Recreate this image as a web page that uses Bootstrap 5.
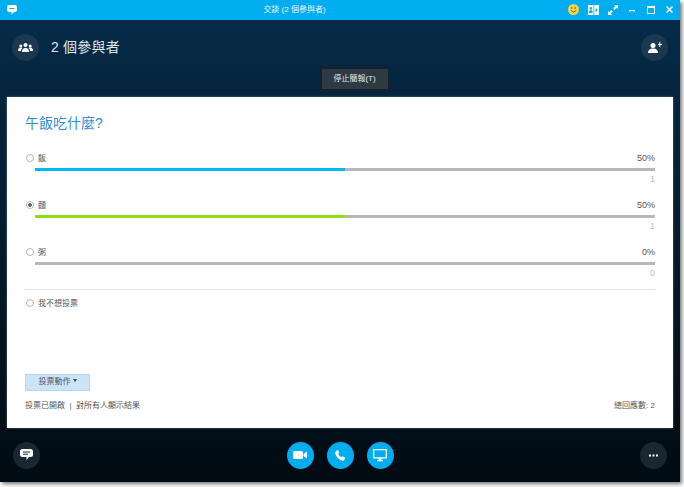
<!doctype html>
<html lang="zh-Hant"><head><meta charset="utf-8">
<link href="https://cdn.jsdelivr.net/npm/bootstrap@5.3.0/dist/css/bootstrap.min.css" rel="stylesheet">
<style>
html,body{margin:0;height:487px;overflow:hidden;background:#fff}
body{font-family:"Liberation Sans","Noto Sans CJK TC",sans-serif;font-size:8px;color:#555}
.win{width:680px;height:482px;background:linear-gradient(#062d4c 0,#05253e 90px,#031523 330px,#010b13 482px);box-shadow:2px 2px 4px rgba(0,0,0,.55)}
.tbar{height:20px;background:#00adef;color:#e6f6fd;padding:0 7px 0 7px}
.tbar-title{flex:1;text-align:center;font-size:8px;padding-left:4px}
.tbtns{gap:11px}
.tight{margin-right:-2px}
.hdr{height:56px;padding:0 12px;color:#dfe7ec}
.hdr-t{font-size:14px;letter-spacing:.2px;margin-left:12px}
.cbtn{width:27px;height:27px;border-radius:50%;background:#1c3850;flex:none}
.cbtn.dk{background:#1b2730}
.stopr{height:21px;padding-left:29px}
.stopb{width:70px;height:24px;background:#2d3a44;border:2px solid #16202a;color:#e6e9eb;font-size:8px;border-radius:0;margin-top:-9px;padding:0}
.pane{margin:0 7px;height:332px;background:#fff;padding:16px 18px 0;box-shadow:0 0 2px rgba(255,255,255,.4)}
.ttl{font-size:14px;color:#2f8bd6;line-height:20px;margin-bottom:19px;font-weight:400}
.opt{height:47px}
.lab{height:13px;line-height:13px;color:#555}
.pct{font-size:9px}
.rad{width:8px;height:8px;border:1px solid #b5b5b5;border-radius:50%;background:#fff;flex:none;margin:0 5px 0 1px}
.rad.on{background:radial-gradient(circle,#666 0,#666 40%,#fff 45%)}
.lab .rad+span{margin-left:-1px}
.trk{height:3px;margin:3px 0 2px 10px;background:#b8b8b8;display:flex}
.fil{height:3px}
.c1{background:#00b8ee}.c2{background:#8fdc12}
.cnt{color:#bbb;text-align:right;line-height:12px;font-size:9px}
.rule{border-top:1px solid #e4e4e4;margin:-4px 0 7px}
.actb{display:block;width:65px;height:17px;background:#cbe4f7;border:1px solid #b3d8f3;border-radius:0;color:#555;font-size:8px;padding:0;line-height:14px;margin-top:64px}
.caretm{display:inline-block;border:2px solid transparent;border-top:3px solid #444;border-bottom:0;margin-left:2px;vertical-align:2px}
.foot{margin-top:9px;line-height:12px}
.bot{height:54px;padding:0 13px}
.mid{gap:13px}
.blue{background:#00adef}
svg{display:block}
</style></head><body>
<div class="win d-flex flex-column">
 <div class="tbar d-flex align-items-center">
  <svg width="10" height="10" viewBox="0 0 10 10"><path fill="#fff" d="M2 0h6a2 2 0 0 1 2 2v3a2 2 0 0 1-2 2H7L4.500 9.500V7H2a2 2 0 0 1-2-2V2a2 2 0 0 1 2-2z"/><path stroke="#00adef" d="M2.500 3.500h5"/></svg>
  <div class="tbar-title">交談 (2 個參與者)</div>
  <div class="d-flex align-items-center tbtns">
   <svg class="tight" width="11" height="11" viewBox="0 0 11 11"><circle cx="5.500" cy="5.500" r="5.500" fill="#f3d34a"/><circle cx="3.800" cy="4" r=".8" fill="#6b5a10"/><circle cx="7.200" cy="4" r=".8" fill="#6b5a10"/><path d="M2.800 6.500q2.700 3 5.400 0" fill="none" stroke="#6b5a10" stroke-width=".8"/></svg>
   <svg class="tight" width="11" height="10" viewBox="0 0 11 10"><path fill="#fff" d="M0 0h11v10H0z"/><path fill="#00adef" d="M5.500 0h.8v10h-.8z"/><circle cx="2.800" cy="3.400" r="1.300" fill="#00adef"/><path fill="#00adef" d="M1 8q0-3 1.800-3t1.800 3z"/><path fill="#00adef" d="M9 3v4L7 5z"/></svg>
   <svg width="10" height="10" viewBox="0 0 10 10"><path fill="#fff" d="M6 0h4v4L8.700 2.700 6.500 4.900 5.200 3.600 7.300 1.300zM0 10V6l1.300 1.300 2.200-2.200 1.300 1.300-2.200 2.200L4 10z"/></svg>
   <svg width="7" height="10" viewBox="0 0 7 10"><path fill="#fff" d="M0 5h6v1.300H0z"/></svg>
   <svg width="8" height="8" viewBox="0 0 8 8"><path fill="none" stroke="#fff" d="M.5 1.500h7v6h-7z"/><path fill="#fff" d="M0 0h8v2H0z"/></svg>
   <svg width="7" height="7" viewBox="0 0 7 7"><path stroke="#fff" stroke-width="1.500" d="M.5.500l6 6M6.500.500l-6 6"/></svg>
  </div>
 </div>
 <div class="hdr d-flex align-items-center">
  <div class="cbtn d-flex align-items-center justify-content-center">
   <svg width="15" height="9" viewBox="0 0 15 9"><g fill="#fff"><circle cx="7.500" cy="2" r="2"/><path d="M4 9q0-4 3.500-4T11 9z"/><circle cx="2.800" cy="3" r="1.500"/><path d="M0 8q0-3.500 2.800-3.500 1 0 1.500.5Q3 6 3 8z"/><circle cx="12.200" cy="3" r="1.500"/><path d="M15 8q0-3.500-2.800-3.500-1 0-1.500.5Q12 6 12 8z"/></g></svg>
  </div>
  <div class="hdr-t flex-grow-1">2 個參與者</div>
  <div class="cbtn d-flex align-items-center justify-content-center">
   <svg width="14" height="11" viewBox="0 0 14 11"><g fill="#fff"><circle cx="5" cy="3.500" r="2.500"/><path d="M0 11q0-4.500 5-4.500T10 11z"/><path d="M10 2h1.300V0h1v2H14v1h-1.700v2h-1V3H10z"/></g></svg>
  </div>
 </div>
 <div class="stopr d-flex justify-content-center align-items-start">
  <button type="button" class="btn stopb">停止簡報(T)</button>
 </div>
 <div class="pane">
  <h1 class="ttl">午飯吃什麼?</h1>
  <div class="opt">
   <div class="lab d-flex align-items-center"><span class="rad"></span><span class="flex-grow-1">飯</span><span class="pct">50%</span></div>
   <div class="trk"><div class="fil c1" style="width:50%"></div></div>
   <div class="cnt">1</div>
  </div>
  <div class="opt">
   <div class="lab d-flex align-items-center"><span class="rad on"></span><span class="flex-grow-1">麵</span><span class="pct">50%</span></div>
   <div class="trk"><div class="fil c2" style="width:50%"></div></div>
   <div class="cnt">1</div>
  </div>
  <div class="opt">
   <div class="lab d-flex align-items-center"><span class="rad"></span><span class="flex-grow-1">粥</span><span class="pct">0%</span></div>
   <div class="trk"></div>
   <div class="cnt">0</div>
  </div>
  <div class="rule"></div>
  <div class="lab d-flex align-items-center"><span class="rad"></span><span>我不想投票</span></div>
  <button type="button" class="btn actb">投票動作<span class="caretm"></span></button>
  <div class="foot d-flex justify-content-between"><span>投票已開啟 &nbsp;|&nbsp; 對所有人顯示結果</span><span>總回應數: 2</span></div>
 </div>
 <div class="bot d-flex align-items-center justify-content-between">
  <div class="cbtn dk d-flex align-items-center justify-content-center">
   <svg width="13" height="12" viewBox="0 0 13 12"><path fill="#fff" d="M2.500 0h8A2.500 2.500 0 0 1 13 2.500v3A2.500 2.500 0 0 1 10.500 8H9l-2.500 3V8h-4A2.500 2.500 0 0 1 0 5.500v-3A2.500 2.500 0 0 1 2.500 0z"/><path stroke="#1b2730" d="M3 3h7M3 5.200h5"/></svg>
  </div>
  <div class="d-flex mid">
   <div class="cbtn blue d-flex align-items-center justify-content-center">
    <svg width="14" height="8" viewBox="0 0 14 8"><path fill="#fff" d="M1.500 0h7A1.500 1.500 0 0 1 10 1.500v5A1.500 1.500 0 0 1 8.500 8h-7A1.500 1.500 0 0 1 0 6.500v-5A1.500 1.500 0 0 1 1.500 0zM10.500 3L14 .5v7L10.500 5z"/></svg>
   </div>
   <div class="cbtn blue d-flex align-items-center justify-content-center">
    <svg width="11" height="11" viewBox="0 0 11 11"><path fill="#fff" d="M2.200.2l1 0 1 2.600-1 1.200q.8 2 3 3.200l1.300-1 2.400 1.200v1.200Q9.500 11 8 10.800 1.500 9.500.2 3 0 1.200 2.200.2z"/></svg>
   </div>
   <div class="cbtn blue d-flex align-items-center justify-content-center">
    <svg width="14" height="13" viewBox="0 0 14 13"><path fill="#fff" fill-rule="evenodd" d="M0 0h14v9.500H8.500V11H10v1.200H4V11h1.500V9.500H0zM1.300 1.300v6.900h11.400V1.300z"/></svg>
   </div>
  </div>
  <div class="cbtn dk d-flex align-items-center justify-content-center">
   <svg width="9" height="3" viewBox="0 0 9 3"><g fill="#fff"><rect width="2" height="2" y=".5"/><rect x="3.500" width="2" height="2" y=".5"/><rect x="7" width="2" height="2" y=".5"/></g></svg>
  </div>
 </div>
</div>
<script src="https://cdn.jsdelivr.net/npm/bootstrap@5.3.0/dist/js/bootstrap.bundle.min.js"></script>
</body></html>
